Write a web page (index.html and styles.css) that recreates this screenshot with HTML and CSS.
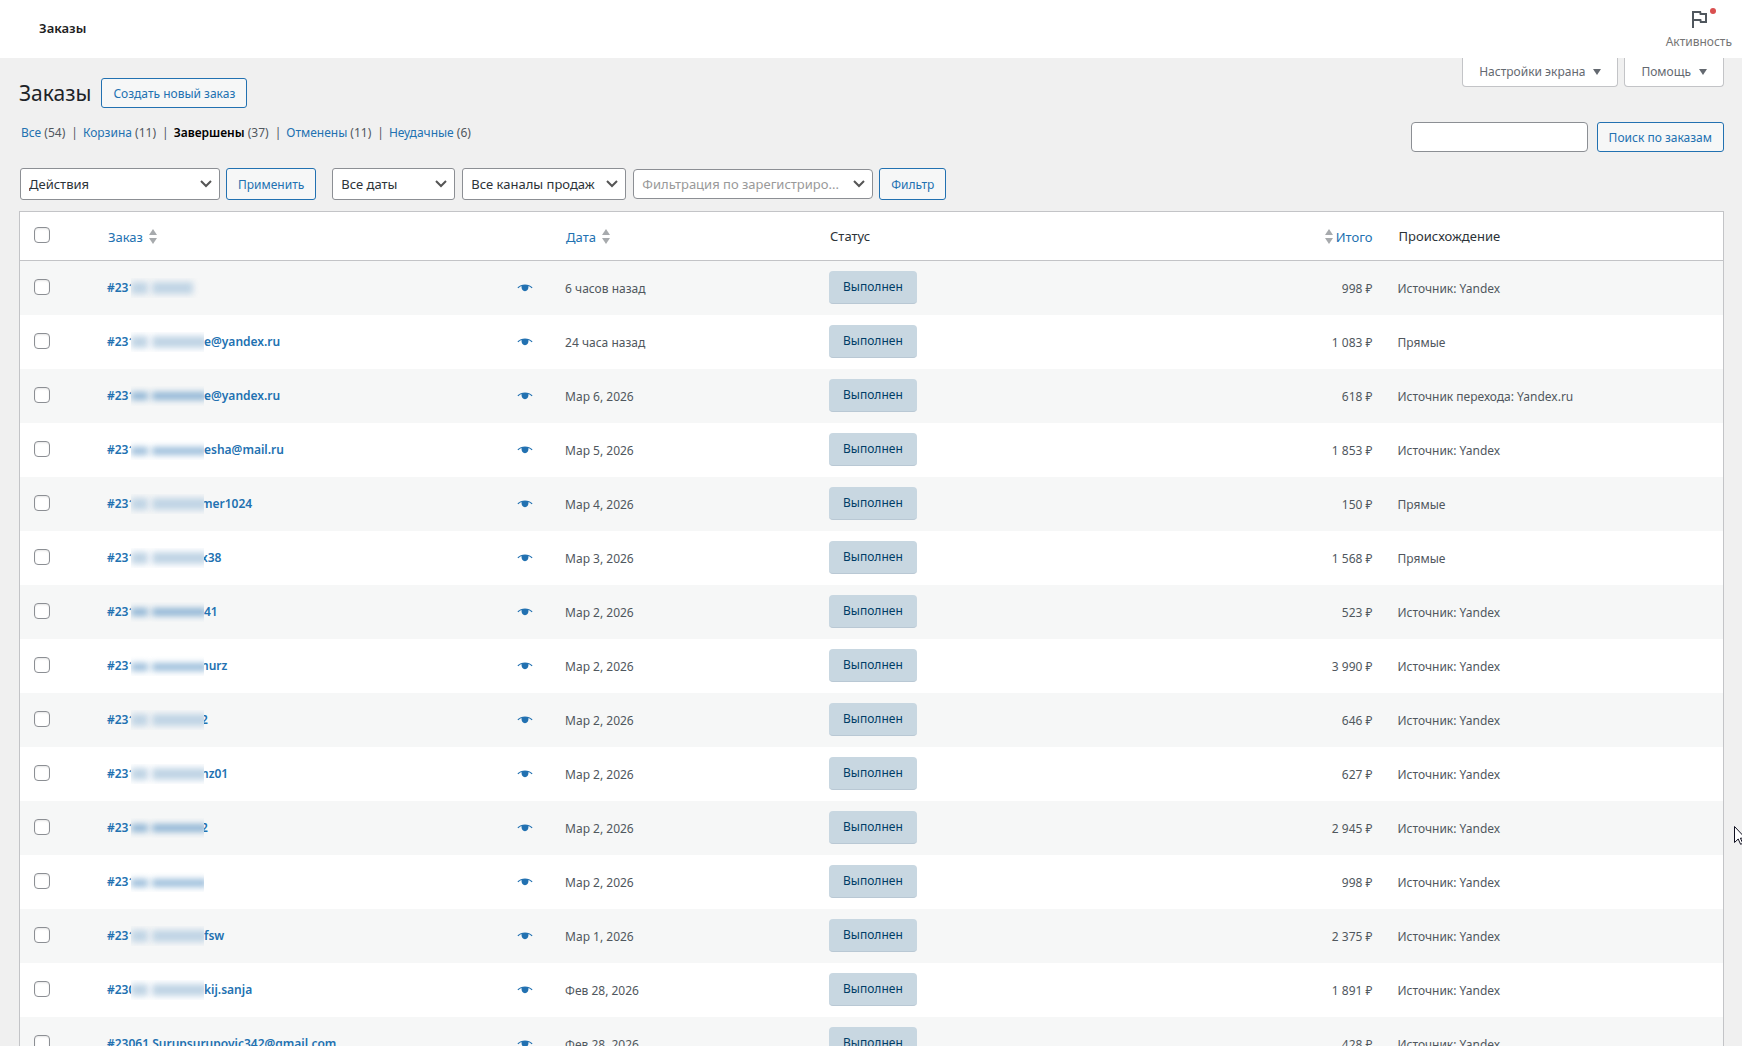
FILE: index.html
```html
<!DOCTYPE html>
<html lang="ru">
<head>
    <meta charset="UTF-8">
    <meta name="viewport" content="width=device-width, initial-scale=1.0">
    <title>Заказы</title>
    <link rel="stylesheet" href="styles.css">
</head>
<body>
    <header class="topbar">
        <div class="topbar-title">Заказы</div>
        <button class="activity" type="button">
            <svg class="flag" viewBox="0 0 24 24" width="24" height="24"><path d="M12.36 6l.4 2H18v6h-3.36l-.4-2H7V6h5.36M14 4H5v17h2v-7h5.6l.4 2h7V6h-5.6L14 4z"/></svg>
            <span class="unread"></span>
            <span>Активность</span>
        </button>
    </header>

    <main class="wrap">
        <div class="head">
            <div class="title-row">
                <h1>Заказы</h1>
                <a class="button" href="#">Создать новый заказ</a>
            </div>
            <div class="screen-links">
                <button type="button">Настройки экрана</button>
                <button type="button">Помощь</button>
            </div>
        </div>

        <div class="sub-row">
            <ul class="subsubsub">
                <li><a href="#">Все</a> (54)</li>
                <li><a href="#">Корзина</a> (11)</li>
                <li><a class="current" href="#">Завершены</a> (37)</li>
                <li><a href="#">Отменены</a> (11)</li>
                <li><a href="#">Неудачные</a> (6)</li>
            </ul>
            <form class="search-box">
                <input type="search" aria-label="Поиск по заказам">
                <button class="button" type="button">Поиск по заказам</button>
            </form>
        </div>

        <div class="tablenav">
            <select class="bulk" aria-label="Действия"><option>Действия</option></select>
            <button class="button apply" type="button">Применить</button>
            <select class="dates" aria-label="Все даты"><option>Все даты</option></select>
            <select class="channels" aria-label="Все каналы продаж"><option>Все каналы продаж</option></select>
            <select class="customer" aria-label="Фильтрация"><option>Фильтрация по зарегистриро...</option></select>
            <button class="button" type="button">Фильтр</button>
        </div>

        <table class="orders">
            <thead>
                <tr>
                    <th class="col-cb"><input type="checkbox" aria-label="Выделить все"></th>
                    <th class="col-order"><a href="#">Заказ<span class="sort"></span></a></th>
                    <th class="col-date"><a href="#">Дата<span class="sort"></span></a></th>
                    <th class="col-status">Статус</th>
                    <th class="col-total"><a href="#"><span class="sort"></span>Итого</a></th>
                    <th class="col-origin">Происхождение</th>
                </tr>
            </thead>
            <tbody id="orders"></tbody>
        </table>
    </main>

    <svg class="cursor" viewBox="0 0 12 19" width="12" height="19"><path d="M.5.5v16l3.7-3.5 2.4 5.3 2.2-1-2.4-5.1h5.1z"/></svg>

    <script src="orders.js"></script>
</body>
</html>
```

FILE: styles.css
```css
* {
    box-sizing: border-box;
}
body {
    margin: 0;
    height: 100vh;
    overflow: hidden;
    background: #f0f0f0;
    color: #3c434a;
    font-family: "Noto Sans", "Open Sans", sans-serif;
    font-size: 12px;
    line-height: 18px;
}
a {
    color: #2271b1;
    text-decoration: none;
}
button,
input,
select {
    font: inherit;
    margin: 0;
}

/* top bar */
.topbar {
    display: flex;
    justify-content: space-between;
    height: 58px;
    padding: 0 10px 0 39px;
    background: #fff;
}
.topbar-title {
    color: #1e1e1e;
    font-size: 13px;
    font-weight: 600;
    line-height: 56px;
}
.activity {
    position: relative;
    display: flex;
    flex-direction: column;
    align-items: center;
    padding: 7px 0 0;
    border: 0;
    background: none;
    color: #757575;
    line-height: 22px;
}
.flag {
    fill: #50575e;
}
.unread {
    position: absolute;
    top: 8px;
    left: 50%;
    width: 6px;
    height: 6px;
    margin-left: 11px;
    border-radius: 50%;
    background: #d94f4f;
}

/* page head */
.wrap {
    padding: 0 18px 0 19px;
}
.head {
    display: flex;
    justify-content: space-between;
    align-items: flex-start;
}
.title-row {
    display: flex;
    align-items: center;
    gap: 10px;
    padding-top: 20px;
}
h1 {
    margin: 0;
    color: #1d2327;
    font-size: 21px;
    font-weight: 400;
    line-height: 30px;
}
.button {
    height: 30px;
    padding: 0 11px;
    border: 1px solid #2271b1;
    border-radius: 3px;
    background: #f6f7f7;
    color: #2271b1;
    line-height: 29px;
    white-space: nowrap;
}
.screen-links {
    display: flex;
    gap: 6px;
}
.screen-links button {
    display: flex;
    align-items: center;
    gap: 8px;
    height: 29px;
    padding: 0 16px;
    border: 1px solid #c3c4c7;
    border-top: 0;
    border-radius: 0 0 4px 4px;
    background: #fff;
    color: #646970;
}
.screen-links button::after {
    content: "";
    border: 4px solid transparent;
    border-top: 6px solid #646970;
    border-bottom: 0;
}
.sub-row {
    display: flex;
    justify-content: space-between;
    align-items: flex-start;
    padding-top: 14px;
}
.subsubsub {
    display: flex;
    margin: 0;
    padding: 2px 0 0 2px;
    list-style: none;
    color: #50575e;
}
.subsubsub li + li::before {
    content: "|";
    margin: 0 5px 0 6px;
}
.subsubsub .current {
    color: #000;
    font-weight: 600;
}
.search-box {
    display: flex;
    gap: 9px;
}
.search-box input {
    width: 177px;
    height: 30px;
    border: 1px solid #8c8f94;
    border-radius: 4px;
    background: #fff;
}

/* filters */
.tablenav {
    display: flex;
    align-items: center;
    gap: 6px;
    padding: 16px 0 11px 1px;
}
.tablenav .button {
    height: 32px;
}
.tablenav select {
    height: 32px;
    padding: 0 24px 0 8px;
    border: 1px solid #8c8f94;
    border-radius: 3px;
    background: #fff url('data:image/svg+xml,<svg xmlns="http://www.w3.org/2000/svg" width="12" height="8" viewBox="0 0 12 8"><path d="M1 1l5 5 5-5" fill="none" stroke="%23555" stroke-width="2"/></svg>') no-repeat right 7px center;
    color: #2c3338;
    font-size: 13px;
    appearance: none;
}
.tablenav .bulk {
    width: 200px;
}
.tablenav .apply {
    margin-right: 10px;
}
.tablenav .dates {
    width: 123px;
    margin-right: 1px;
}
.tablenav .channels {
    width: 164px;
    margin-right: 1px;
}
.tablenav .customer {
    width: 240px;
    height: 30px;
    border-radius: 4px;
    color: #999;
}

/* orders table */
.orders {
    width: 100%;
    border: 1px solid #c3c4c7;
    border-spacing: 0;
    table-layout: fixed;
    background: #fff;
}
.orders th,
.orders td {
    height: 54px;
    padding: 1px 10px 0;
    text-align: left;
    vertical-align: middle;
    white-space: nowrap;
}
.orders th {
    height: 49px;
    padding: 0 11px;
    border-bottom: 1px solid #c3c4c7;
    color: #2c3338;
    font-size: 13px;
    font-weight: 400;
}
.orders td {
    color: #50575e;
}
.orders tbody tr:nth-child(odd) {
    background: #f6f7f7;
}
.orders .col-cb {
    width: 77px;
    padding: 0 0 2px 14px;
}
.col-order {
    width: 26.9%;
}
.col-date,
.col-status {
    width: 15.5%;
}
.orders td.status-cell {
    padding: 0 10px 1px;
}
.orders td.order-col {
    padding-top: 0;
}
.orders .col-total {
    padding-right: 15px;
    text-align: right;
}
.col-origin {
    width: 19.7%;
}
.orders input {
    display: block;
    width: 16px;
    height: 16px;
    border: 1px solid #8c8f94;
    border-radius: 4px;
    background: #fff;
    box-shadow: inset 0 1px 2px rgba(0, 0, 0, 0.1);
    appearance: none;
}
.orders th a {
    display: inline-flex;
    align-items: center;
    gap: 6px;
    vertical-align: middle;
}
.orders th.col-total a {
    gap: 3px;
}
.sort {
    display: flex;
    flex-direction: column;
    gap: 3px;
}
.sort::before,
.sort::after {
    content: "";
    border: 4px solid transparent;
}
.sort::before {
    border-top: 0;
    border-bottom: 6px solid #a7aaad;
}
.sort::after {
    border-top: 6px solid #a7aaad;
    border-bottom: 0;
}
.order-cell {
    display: flex;
    align-items: center;
    justify-content: space-between;
    padding-right: 12px;
}
.order-link {
    display: flex;
    align-items: center;
    font-weight: 600;
}
.num {
    width: 24px;
}
.tail.cut {
    margin-left: -3px;
}

/* hidden part of the customer name */
.mask {
    position: relative;
    display: flex;
    gap: 4px;
    width: 73px;
    height: 20px;
    padding-top: 4px;
    overflow: hidden;
    background: #fff;
}
tr:nth-child(odd) .mask {
    background: #f6f7f7;
}
.mask::before,
.mask::after {
    content: "";
    height: 12px;
    background: #c0d4e5;
    filter: blur(3px);
}
.mask::before {
    width: 17px;
}
.mask::after {
    flex: 1;
    margin-right: -3px;
}
.mask.short::after {
    margin-right: 11px;
}
tr:nth-child(4n+3) .mask::before,
tr:nth-child(4n+3) .mask::after {
    height: 8px;
    margin-top: 2px;
    background: #8fb5d5;
}
tr:nth-child(4n) .mask::before,
tr:nth-child(4n) .mask::after {
    height: 8px;
    margin-top: 3px;
    background: #9cbedb;
}

.eye {
    fill: #2271b1;
}
.status {
    display: inline-block;
    padding: 0 14px;
    border-bottom: 1px solid #b9c8d4;
    border-radius: 4px;
    background: #c8d7e1;
    color: #003d66;
    line-height: 32px;
    vertical-align: middle;
}

.cursor {
    position: absolute;
    top: 826px;
    left: 100%;
    margin-left: -8px;
    fill: #fff;
    stroke: #101020;
}
```

FILE: orders.js
```js
// [number, visible end of the name, end starts under the mask, date, total, origin]
const orders = [
    ['#231', '', false, '6 часов назад', '998', 'Источник: Yandex'],
    ['#231', 'e@yandex.ru', false, '24 часа назад', '1 083', 'Прямые'],
    ['#231', 'e@yandex.ru', false, 'Мар 6, 2026', '618', 'Источник перехода: Yandex.ru'],
    ['#231', 'esha@mail.ru', false, 'Мар 5, 2026', '1 853', 'Источник: Yandex'],
    ['#231', 'mer1024', true, 'Мар 4, 2026', '150', 'Прямые'],
    ['#231', 'x38', true, 'Мар 3, 2026', '1 568', 'Прямые'],
    ['#231', '41', false, 'Мар 2, 2026', '523', 'Источник: Yandex'],
    ['#231', 'nurz', true, 'Мар 2, 2026', '3 990', 'Источник: Yandex'],
    ['#231', '2', true, 'Мар 2, 2026', '646', 'Источник: Yandex'],
    ['#231', 'nz01', true, 'Мар 2, 2026', '627', 'Источник: Yandex'],
    ['#231', '2', true, 'Мар 2, 2026', '2 945', 'Источник: Yandex'],
    ['#231', '', false, 'Мар 2, 2026', '998', 'Источник: Yandex'],
    ['#231', 'fsw', false, 'Мар 1, 2026', '2 375', 'Источник: Yandex'],
    ['#230', 'kij.sanja', false, 'Фев 28, 2026', '1 891', 'Источник: Yandex'],
    ['#23061 Surupsurupovic342@gmail.com', null, false, 'Фев 28, 2026', '428', 'Источник: Yandex']
];

const eye = '<svg class="eye" viewBox="0 0 16 8" width="16" height="8"><path d="M.4 3.600Q3.500.400 8 .400T15.600 3.600L14.600 4.200Q13 2.700 11.400 2.100C11.800 5 10.200 7.200 8 7.200S4.200 5 4.600 2.100Q3 2.700 1.400 4.200Z"/></svg>';

document.getElementById('orders').innerHTML = orders.map(([num, tail, cut, date, total, origin], i) => {
    const name = tail === null
        ? num
        : `<span class="num">${num}</span><span class="mask${i === 0 ? ' short' : ''}"></span><span class="tail${cut ? ' cut' : ''}">${tail}</span>`;
    return `<tr>
        <td class="col-cb"><input type="checkbox" aria-label="Выбрать заказ"></td>
        <td class="order-col"><div class="order-cell"><a class="order-link" href="#">${name}</a>${eye}</div></td>
        <td>${date}</td>
        <td class="status-cell"><span class="status">Выполнен</span></td>
        <td class="col-total">${total} ₽</td>
        <td>${origin}</td>
    </tr>`;
}).join('');
```
